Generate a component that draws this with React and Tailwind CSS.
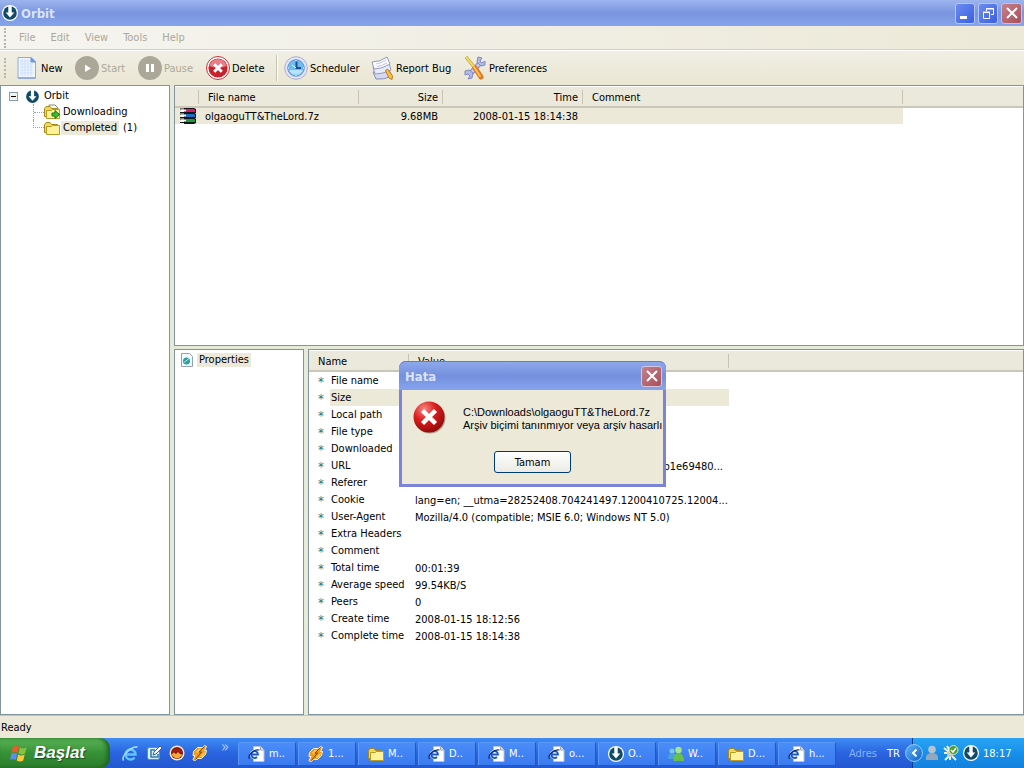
import { useState } from "react";

const OrbitLogo = ({ size = 16, ring = "#ffffff" }) => (
  <svg width={size} height={size} viewBox="0 0 16 16" className="shrink-0">
    <circle cx="8" cy="8" r="8" fill={ring} />
    <circle cx="8" cy="8" r="6.8" fill="#0f4a66" />
    <path d="M6.3 1h3.4v6.6h2.6L8 12.4 3.7 7.6h2.6z" fill="#fff" />
  </svg>
);

const NewIcon = () => (
  <svg width="20" height="24" viewBox="0 0 20 24">
    <path d="M1 1.5h13l4.5 4.5v16H1z" fill="#eef5ff" stroke="#8facde" />
    <path d="M3 5h13M3 8h13M3 11h13M3 14h13M3 17h13M5 3v17M8 3v17M11 3v17M14 6v14" stroke="#cfe0fa" />
    <path d="M14 1.5V6h4.5z" fill="#6e9ce6" stroke="#6e93d6" />
    <path d="M1 22h17.5" stroke="#6c8fd0" />
  </svg>
);

const StartIcon = () => (
  <svg width="24" height="24" viewBox="0 0 24 24">
    <circle cx="12" cy="12" r="12" fill="#aca899" />
    <path d="M10 8.5l6 4-6 3.5z" fill="#fff" />
  </svg>
);

const PauseIcon = () => (
  <svg width="24" height="24" viewBox="0 0 24 24">
    <circle cx="12" cy="12" r="12" fill="#aca899" />
    <path d="M8 8h3v8H8zM13 8h3v8h-3z" fill="#fff" />
  </svg>
);

const DeleteIcon = () => (
  <svg width="24" height="24" viewBox="0 0 24 24">
    <circle cx="12" cy="12" r="11.5" fill="#fff" stroke="#c8323c" />
    <circle cx="12" cy="12" r="9.6" fill="#c9222d" />
    <path d="M3.2 10a9 9 0 0 1 17.6 0q-8.8 3-17.6 0z" fill="#e58088" />
    <path d="M8.2 8.2l7.6 7.6M15.8 8.2l-7.6 7.6" stroke="#fff" strokeWidth="3" />
  </svg>
);

const ClockIcon = () => (
  <svg width="24" height="24" viewBox="0 0 24 24">
    <circle cx="12" cy="12" r="11.3" fill="#e4e6f8" stroke="#a9acd0" />
    <circle cx="12" cy="12" r="8.3" fill="#6cbcec" stroke="#6a8fd4" />
    <path d="M5 14a7.5 7.5 0 0 0 14 0z" fill="#b5e4fb" />
    <path d="M12.500 5.500V12H17" stroke="#1d4f9e" strokeWidth="2" fill="none" />
    <path d="M12 12l-4-3M12 4v1M12 19v1M4 12h1M19 12h1" stroke="#f4faff" />
  </svg>
);

const ReportIcon = () => (
  <svg width="23" height="24" viewBox="0 0 23 24">
    <path d="M2 16q8 0 15-4l4 8q-8 4-16 3z" fill="#d5d8ee" stroke="#8b90b8" />
    <path d="M2 11q8 0 16-4l2 7q-8 4-16 4z" fill="#e9ebf8" stroke="#9499c2" />
    <path d="M1 6q8 0 15-5l3 7q-8 5-16 5z" fill="#fafaff" stroke="#9499c2" />
    <path d="M5 8q6-1 10-4M6 10.500q6-1 10-3.500" stroke="#c3c7e2" fill="none" />
    <path d="M14.500 14.500l2-1.500 5 7-.5 3.500-3-1.500z" fill="#f9c33e" stroke="#c07a1a" />
  </svg>
);

const PreferencesIcon = () => (
  <svg width="22" height="24" viewBox="0 0 22 24">
    <path d="M6 18L17 6" stroke="#7f88c4" strokeWidth="5" />
    <path d="M6 18L17 6" stroke="#c6cbee" strokeWidth="3" />
    <path d="M14 1l-1 5 4 4 4-1v-4l-3 2-2-2 2-3z" fill="#b4bae6" stroke="#7f88c4" />
    <path d="M1 15l4-1 4 3-1 5-4 1 2-3-2-2-3 1z" fill="#b4bae6" stroke="#7f88c4" />
    <path d="M2 1l9 11" stroke="#a88a28" strokeWidth="3" />
    <path d="M2 1l9 11" stroke="#f6dc5c" strokeWidth="2" />
    <path d="M11 12l6 9" stroke="#e07a2a" strokeWidth="5" strokeLinecap="round" />
    <path d="M10 11l6 9" stroke="#ffc24c" strokeWidth="2" strokeLinecap="round" />
  </svg>
);

const FolderIcon = ({ arrow, size = 16 }) => (
  <svg width={size} height={size} viewBox="0 0 16 16" className="shrink-0">
    {arrow && <path d="M5 1h6l3 3v5H5z" fill="#fff" stroke="#8a8a6a" />}
    <path d="M.5 4.500l1.500-2h4l1.500 2h6v8H.5z" fill="#f3d75a" stroke="#a8891c" />
    <path d="M2.500 14.500v-8h5l1-1h7v9z" fill="#fdf19a" stroke="#b59a26" />
    {arrow && <path d="M8 9h3V6.500l4.500 4-4.500 4V12H8z" fill="#35c22e" stroke="#15761a" />}
  </svg>
);

const ArchiveIcon = () => (
  <svg width="17" height="16" viewBox="0 0 17 16">
    {[
      ["#cf1f62", 0],
      ["#1f6fc8", 5],
      ["#1d9a3e", 10],
    ].map(([color, y]) => (
      <g key={color}>
        <path d={`M4 ${y}h10l2 1v4l-2 1H4z`} fill="#14141c" />
        <path d={`M6 ${y + 1}h8l1 1v2H6z`} fill={color} />
        <path d={`M0 ${y + 1}h5M0 ${y + 4.500}h5`} stroke="#14141c" />
        <path d={`M1 ${y + 2.500}h5`} stroke="#fff" strokeWidth="2" />
      </g>
    ))}
  </svg>
);

const PropertiesIcon = () => (
  <svg width="12" height="14" viewBox="0 0 12 14">
    <path d="M.5.5h8l3 3v10H.5z" fill="#f4fafa" stroke="#8fa4ac" />
    <circle cx="5.500" cy="8" r="3.500" fill="#2aa0a4" />
    <path d="M3 9.500l5-4" stroke="#b5ecec" />
  </svg>
);

const IeIcon = () => (
  <svg width="17" height="17" viewBox="0 0 17 17">
    <path d="M4.500 9.500h9a5 5 0 1 0-1 3" fill="none" stroke="#5fc4fa" strokeWidth="2.500" />
    <path d="M1.500 15.500C-1 11 9 1 15.500 2" fill="none" stroke="#a9e2ff" strokeWidth="1.500" />
  </svg>
);

const DesktopIcon = () => (
  <svg width="16" height="16" viewBox="0 0 16 16">
    <rect x="1.500" y="2.500" width="12" height="12" rx="2" fill="#d9f1fb" stroke="#4b93c6" />
    <path d="M9 5H5v7h7V9" fill="none" stroke="#2b78b8" strokeWidth="1.500" />
    <path d="M7 10l1-3 6-6 2 2-6 6z" fill="#fff" stroke="#42607c" />
  </svg>
);

const BallIcon = () => (
  <svg width="16" height="16" viewBox="0 0 16 16">
    <circle cx="8" cy="8" r="7.500" fill="#f7e9d2" />
    <circle cx="8" cy="8" r="6" fill="#7c1212" />
    <path d="M2.500 8.500a5.500 5.500 0 0 1 11 0q-2-2-3.500-.5T8 7.500 6 8 2.500 8.500z" fill="#a01c14" />
    <path d="M2.500 9.500l2.500-2 2 1.500 2-2 2 2 2.500.5q-5.500 8-11 0z" fill="#f6a93a" />
  </svg>
);

const WinampIcon = () => (
  <svg width="16" height="16" viewBox="0 0 16 16" className="shrink-0">
    <path d="M1.500 6.500l4-4h5l2-2 2 1-2 4h2l-1 4-4 4h-4l-3 2.500-1.500-1.500 2-4h-2z" fill="#f39a1c" stroke="#fff0c8" />
    <path d="M12.500 1.500L7 7h2.500L3.500 14.500" fill="none" stroke="#7a4408" />
    <path d="M4 7l3-3h2L5.500 8zM8 12l3-4 2-1-1 3-2 2z" fill="#ffd258" />
  </svg>
);

const PageIcon = () => (
  <svg width="17" height="16" viewBox="0 0 17 16" className="shrink-0">
    <path d="M5.500.5h7l3.500 3.500v11.500H5.500z" fill="#fff" stroke="#b8c2d0" />
    <path d="M12.500.5V4H16" fill="#dde6f2" stroke="#9aa6b8" />
    <circle cx="6.500" cy="8.500" r="4.500" fill="#fff" />
    <path d="M4 8.500h6a3.400 3.400 0 1 0-1 2.500" fill="none" stroke="#1a56c8" strokeWidth="1.800" />
    <path d="M1.500 13C-1 9 6 3 11.500 4" fill="none" stroke="#10307c" strokeWidth="1.200" />
  </svg>
);

const PeopleIcon = () => (
  <svg width="16" height="16" viewBox="0 0 16 16" className="shrink-0">
    <circle cx="4" cy="5" r="2.500" fill="#7cc6f2" />
    <path d="M0 13q0-6 4-6t4 6z" fill="#4aa2dc" />
    <circle cx="10.500" cy="4" r="3.200" fill="#a4e68a" />
    <path d="M5.500 15q0-8 5-8t5.500 8z" fill="#68c04c" />
  </svg>
);

const UserIcon = () => (
  <svg width="14" height="16" viewBox="0 0 14 16">
    <circle cx="7" cy="4.500" r="3.800" fill="#b4c2d2" />
    <path d="M1 15q-1-7 6-7t6 7z" fill="#93a7c0" />
  </svg>
);

const NetworkIcon = () => (
  <svg width="16" height="16" viewBox="0 0 16 16">
    <path d="M1 3l5 4M1 8h5M2 15l5-5M7 15v-5M13 15l-4-4M4 1l3 5" stroke="#f0f2ea" strokeWidth="2" />
    <circle cx="7" cy="9" r="3" fill="#c8ccc0" />
    <circle cx="10.500" cy="5" r="4.500" fill="#4a9e32" stroke="#d5edc8" />
    <path d="M8 5l2 2 3-4" fill="none" stroke="#fff" strokeWidth="1.500" />
  </svg>
);

const WindowsFlag = () => (
  <svg width="18" height="17" viewBox="0 0 18 17">
    <path d="M3 2q3-2 6 0L7.500 8q-3-2-6 0z" fill="#f0582a" />
    <path d="M10 2.500q3 2 6.500 0L15 8.500q-3 2-6.500 0z" fill="#86c440" />
    <path d="M1.200 9q3-2 6 0L5.700 15q-3-2-5.500 0z" fill="#5a8ef0" />
    <path d="M8.200 9.500q3 2 6.500 0l-1.500 6q-3 2-6.500 0z" fill="#fcc93a" />
  </svg>
);

const ErrorIcon = () => (
  <svg width="33" height="33" viewBox="0 0 33 33" className="shrink-0">
    <defs>
      <radialGradient id="error-red" cx=".35" cy=".25" r=".8">
        <stop offset="0" stopColor="#f58a84" />
        <stop offset=".45" stopColor="#dc1f1f" />
        <stop offset="1" stopColor="#8f0808" />
      </radialGradient>
    </defs>
    <circle cx="17" cy="17" r="15.500" fill="#a8a493" />
    <circle cx="16" cy="16" r="15.500" fill="url(#error-red)" />
    <path d="M9.500 9.500l13 13M22.500 9.500l-13 13" stroke="#fff" strokeWidth="4.500" />
  </svg>
);

const CloseGlyph = () => (
  <svg width="12" height="12" viewBox="0 0 12 12">
    <path d="M1 1l10 10M11 1L1 11" stroke="#fff" strokeWidth="2" />
  </svg>
);

const Grip = () => <span className="h-5 border-l-2 border-dotted border-[#b9b5a2]" />;

const menus = ["File", "Edit", "View", "Tools", "Help"];

const details = [
  ["File name", ""],
  ["Size", ""],
  ["Local path", ""],
  ["File type", ""],
  ["Downloaded", ""],
  ["URL", "b1e69480..."],
  ["Referer", ""],
  ["Cookie", "lang=en; __utma=28252408.704241497.1200410725.12004..."],
  ["User-Agent", "Mozilla/4.0 (compatible; MSIE 6.0; Windows NT 5.0)"],
  ["Extra Headers", ""],
  ["Comment", ""],
  ["Total time", "00:01:39"],
  ["Average speed", "99.54KB/S"],
  ["Peers", "0"],
  ["Create time", "2008-01-15 18:12:56"],
  ["Complete time", "2008-01-15 18:14:38"],
];

const tasks = [
  [PageIcon, "m.."],
  [WinampIcon, "1..."],
  [FolderIcon, "M.."],
  [PageIcon, "D.."],
  [PageIcon, "M.."],
  [PageIcon, "o..."],
  [OrbitLogo, "O.."],
  [PeopleIcon, "W.."],
  [FolderIcon, "D..."],
  [PageIcon, "h..."],
];

const TitleBar = () => (
  <header className="flex h-[26px] shrink-0 items-center bg-linear-to-b from-[#9db5ee] via-[#7a95df] to-[#86a4ec] px-[2px]">
    <OrbitLogo />
    <h1 className="ml-[3px] flex-1 pt-px text-[13px] font-bold text-[#d8e4f8]">Orbit</h1>
    <div className="flex gap-[3px]">
      <button aria-label="Minimize" className="flex h-[21px] w-5 items-end justify-start rounded-[3px] border border-[#b4c6f4] bg-linear-to-br from-[#6d8cf0] to-[#3a5ee0] p-1">
        <span className="h-[3px] w-[7px] bg-white" />
      </button>
      <button aria-label="Restore" className="flex h-[21px] w-5 items-center justify-center rounded-[3px] border border-[#b4c6f4] bg-linear-to-br from-[#6d8cf0] to-[#3a5ee0]">
        <svg width="11" height="11" viewBox="0 0 11 11" fill="none" stroke="#fff">
          <path d="M3.500 3V.5h7v6H8M3 1h8" />
          <path d="M.5 4.500h6v6h-6zM0 4h7" />
        </svg>
      </button>
      <button aria-label="Close" className="flex h-[21px] w-[21px] items-center justify-center rounded-[3px] border border-[#d0bcd8] bg-linear-to-br from-[#c4808c] to-[#a8505c]">
        <CloseGlyph />
      </button>
    </div>
  </header>
);

const ToolButton = ({ icon, label, disabled, width }) => (
  <button disabled={disabled} className={`flex items-center gap-[2px] whitespace-nowrap disabled:text-[#aca899] ${width}`}>
    <span className="flex w-6 shrink-0 justify-center">{icon}</span>
    <span className="pt-px">{label}</span>
  </button>
);

const Toolbar = () => (
  <div className="flex h-[35px] shrink-0 items-center border-t border-white bg-linear-to-b from-[#f1efe5] to-[#e9e6d3] pl-1">
    <Grip />
    <div className="ml-[9px] flex items-center">
      <ToolButton width="w-[60px]" icon={<NewIcon />} label="New" />
      <ToolButton width="w-[63px]" icon={<StartIcon />} label="Start" disabled />
      <ToolButton width="w-[68px]" icon={<PauseIcon />} label="Pause" disabled />
      <ToolButton width="w-[70px]" icon={<DeleteIcon />} label="Delete" />
      <span className="mr-[6px] h-[26px] border-r border-l border-r-white border-l-[#c5c2b0]" />
      <ToolButton width="w-[86px]" icon={<ClockIcon />} label="Scheduler" />
      <ToolButton width="w-[93px]" icon={<ReportIcon />} label="Report Bug" />
      <ToolButton width="w-[90px]" icon={<PreferencesIcon />} label="Preferences" />
    </div>
  </div>
);

const DownloadTree = () => (
  <aside className="w-[170px] shrink-0 border border-[#8194a0] bg-white pt-[2px] pl-2">
    <div className="flex h-4 items-center">
      <button aria-label="Collapse Orbit" className="flex h-[9px] w-[9px] items-center justify-center border border-[#7f9db9] bg-[#f4f3ec]">
        <span className="h-px w-[5px] bg-black" />
      </button>
      <span className="mr-1 ml-[7px] flex">
        <OrbitLogo size={15} />
      </span>
      Orbit
    </div>
    <ul className="ml-6">
      <li className="flex h-4 items-center border-l border-dotted border-[#a0a0a0]">
        <span className="w-[10px] border-t border-dotted border-[#a0a0a0]" />
        <FolderIcon arrow />
        <a href="#downloading" className="ml-[3px]">Downloading</a>
      </li>
      <li className="flex h-4 items-center">
        <span className="h-2 w-[11px] self-start border-b border-l border-dotted border-[#a0a0a0]" />
        <FolderIcon />
        <a href="#completed" className="ml-px bg-[#ece9d8] px-[2px]">Completed</a>
        <span className="ml-1">(1)</span>
      </li>
    </ul>
  </aside>
);

const HeadCell = ({ children, className = "" }) => (
  <th className="h-5 border-b-2 border-[#cbc7b8] bg-[#ebe9dc] p-0 font-normal">
    <div className={`h-[14px] border-r border-[#c7c5b2] leading-4 ${className}`}>{children}</div>
  </th>
);

const FileList = () => (
  <section className="h-[261px] shrink-0 border border-[#8194a0] bg-white pt-[1px]">
    <table className="w-full table-fixed border-collapse">
      <colgroup>
        <col className="w-6" />
        <col className="w-40" />
        <col className="w-[84px]" />
        <col className="w-[140px]" />
        <col className="w-[320px]" />
        <col />
      </colgroup>
      <thead>
        <tr>
          <HeadCell />
          <HeadCell className="pl-[9px] text-left">File name</HeadCell>
          <HeadCell className="pr-1 text-right">Size</HeadCell>
          <HeadCell className="pr-1 text-right">Time</HeadCell>
          <HeadCell className="pl-[9px] text-left">Comment</HeadCell>
          <HeadCell className="border-r-0" />
        </tr>
      </thead>
      <tbody>
        <tr className="h-[17px]">
          <td className="bg-[#ece9d8] p-0 pl-[5px]"><ArchiveIcon /></td>
          <td className="bg-[#ece9d8] p-0 pt-[2px] pl-[6px]">olgaoguTT&amp;TheLord.7z</td>
          <td className="bg-[#ece9d8] p-0 pt-[2px] pr-[5px] text-right">9.68MB</td>
          <td className="bg-[#ece9d8] p-0 pt-[2px] pr-[5px] text-right">2008-01-15 18:14:38</td>
          <td className="bg-[#ece9d8] p-0" />
          <td className="p-0" />
        </tr>
      </tbody>
    </table>
  </section>
);

const Properties = () => (
  <section className="min-w-0 flex-1 border border-[#8194a0] bg-white pt-px">
    <table className="w-full table-fixed border-collapse">
      <colgroup>
        <col className="w-[100px]" />
        <col className="w-[320px]" />
        <col />
      </colgroup>
      <thead>
        <tr>
          <HeadCell className="pl-[9px] text-left">Name</HeadCell>
          <HeadCell className="pl-[9px] text-left">Value</HeadCell>
          <HeadCell className="border-r-0" />
        </tr>
      </thead>
      <tbody>
        {details.map(([name, value]) => (
          <tr key={name} className="h-[17px]">
            <td className="p-0">
              <div className="flex h-[17px] whitespace-nowrap">
                <span className="w-[21px] shrink-0 pt-[3px] pl-[9px] text-[13px] text-[#00808a]">*</span>
                <span className={`flex-1 pt-[2px] pl-px ${name === "Size" ? "bg-[#ece9d8]" : ""}`}>{name}</span>
              </div>
            </td>
            <td className={`p-0 pt-[2px] pr-[6px] pl-[6px] whitespace-nowrap ${name === "Size" ? "bg-[#ece9d8]" : ""} ${name === "URL" ? "text-right" : ""}`}>
              {value}
            </td>
            <td className="p-0" />
          </tr>
        ))}
      </tbody>
    </table>
  </section>
);

const ErrorDialog = ({ onClose }) => (
  <div
    role="alertdialog"
    aria-labelledby="dialog-title"
    className="absolute top-[361px] left-[399px] w-[267px] rounded-t-[7px] border-[3px] border-t-0 border-[#7b84d8] bg-[#ece9d8]"
  >
    <div className="-mx-[3px] flex h-[29px] items-center rounded-t-[7px] border-t border-[#6878cc] bg-linear-to-b from-[#8ea8ec] via-[#7490de] to-[#86a4ee] pr-1 pl-[6px]">
      <h2 id="dialog-title" className="flex-1 pt-[2px] text-[13px] font-bold text-[#d8e4f8]">Hata</h2>
      <button aria-label="Close" onClick={onClose} className="flex h-[21px] w-[21px] items-center justify-center rounded-[3px] border border-[#d8c4dc] bg-linear-to-br from-[#c4808c] to-[#a8505c]">
        <CloseGlyph />
      </button>
    </div>
    <div className="flex gap-[17px] pt-[11px] pl-[11px]">
      <ErrorIcon />
      <p className="pt-[5px] font-[Liberation_Sans,Tahoma,sans-serif] leading-[13px] whitespace-nowrap">
        C:\Downloads\olgaoguTT&amp;TheLord.7z
        <br />
        Arşiv biçimi tanınmıyor veya arşiv hasarlı
      </p>
    </div>
    <div className="flex justify-center pt-[17px] pb-[11px]">
      <button onClick={onClose} className="h-[22px] w-[77px] rounded-[3px] border border-[#003c74] bg-linear-to-b from-white to-[#eceae2] pt-px">
        Tamam
      </button>
    </div>
  </div>
);

const Taskbar = () => (
  <footer className="flex h-[30px] shrink-0 items-stretch bg-linear-to-b from-[#3f8cf3] via-[#2a64e0] to-[#2357cf] text-white">
    <button className="flex w-[110px] items-center gap-[6px] rounded-r-[10px] bg-linear-to-b from-[#5cb458] via-[#369236] to-[#2c7c2c] pl-[10px] shadow-[inset_-3px_0_4px_#1f641f]">
      <WindowsFlag />
      <span className="font-[Liberation_Sans,sans-serif] text-[17px] font-bold italic [text-shadow:1px_1px_1px_#1c4a1c]">Başlat</span>
    </button>
    <div className="flex w-32 items-center gap-[7px] pl-3">
      <IeIcon />
      <DesktopIcon />
      <BallIcon />
      <WinampIcon />
      <span className="ml-[6px] self-start text-[15px] leading-[18px] text-[#a8c8fa]">»</span>
    </div>
    <div className="flex min-w-0 flex-1 items-center pt-[2px]">
      {tasks.map(([Icon, label], i) => (
        <button
          key={i}
          className="mr-[2px] flex h-6 w-[58px] min-w-0 items-center gap-1 rounded-[2px] border border-[#5a98f8] border-r-[#2456c8] border-b-[#2456c8] bg-linear-to-b from-[#4a8cf8] to-[#3a7af0] pl-[9px]"
        >
          <Icon />
          {label}
        </button>
      ))}
      <span className="ml-[11px] text-[#8cb4f6]">Adres</span>
      <span className="ml-[10px]">TR</span>
    </div>
    <div className="relative flex w-28 items-center gap-1 border-l border-[#0c3c90] bg-linear-to-b from-[#2aa4f4] via-[#1690ea] to-[#1480dc] pl-[12px]">
      <button aria-label="Show hidden icons" className="absolute top-[6px] -left-[8px] flex h-[18px] w-[18px] items-center justify-center rounded-full border border-[#8cc8fa] bg-linear-to-br from-[#5ab4f8] to-[#1560c8]">
        <svg width="7" height="8" viewBox="0 0 7 8">
          <path d="M5.500.5L2 4l3.500 3.500" fill="none" stroke="#fff" strokeWidth="2" />
        </svg>
      </button>
      <UserIcon />
      <NetworkIcon />
      <OrbitLogo />
      <time className="pt-px">18:17</time>
    </div>
  </footer>
);

export default function App() {
  const [dialogOpen, setDialogOpen] = useState(true);

  return (
    <div className="relative flex h-screen flex-col overflow-hidden bg-[#ece9d8] font-[DejaVu_Sans_Condensed,Tahoma,sans-serif] text-[11px] leading-[14px] text-black">
      <TitleBar />
      <nav className="flex h-6 shrink-0 items-center border-b border-[#d4d1c0] bg-linear-to-r from-[#f5f4ef] to-[#ece9d8] pl-1 text-[#aca899]">
        <Grip />
        <div className="flex gap-[15px] pt-px pl-[13px]">
          {menus.map((menu) => (
            <button key={menu}>{menu}</button>
          ))}
        </div>
      </nav>
      <Toolbar />
      <main className="flex min-h-0 flex-1 gap-1 bg-[#e6ebd9]">
        <DownloadTree />
        <div className="flex min-w-0 flex-1 flex-col gap-[3px]">
          <FileList />
          <div className="flex min-h-0 flex-1 gap-1">
            <aside className="w-[130px] shrink-0 border border-[#8194a0] bg-white pt-[3px] pl-[6px]">
              <a href="#properties" className="flex items-center gap-1">
                <PropertiesIcon />
                <span className="bg-[#ece9d8] px-[2px]">Properties</span>
              </a>
            </aside>
            <Properties />
          </div>
        </div>
      </main>
      <div className="flex h-[23px] shrink-0 items-center border-t border-[#c5c2b0] pt-[2px] pl-[1px]">Ready</div>
      <Taskbar />
      {dialogOpen && <ErrorDialog onClose={() => setDialogOpen(false)} />}
    </div>
  );
}
